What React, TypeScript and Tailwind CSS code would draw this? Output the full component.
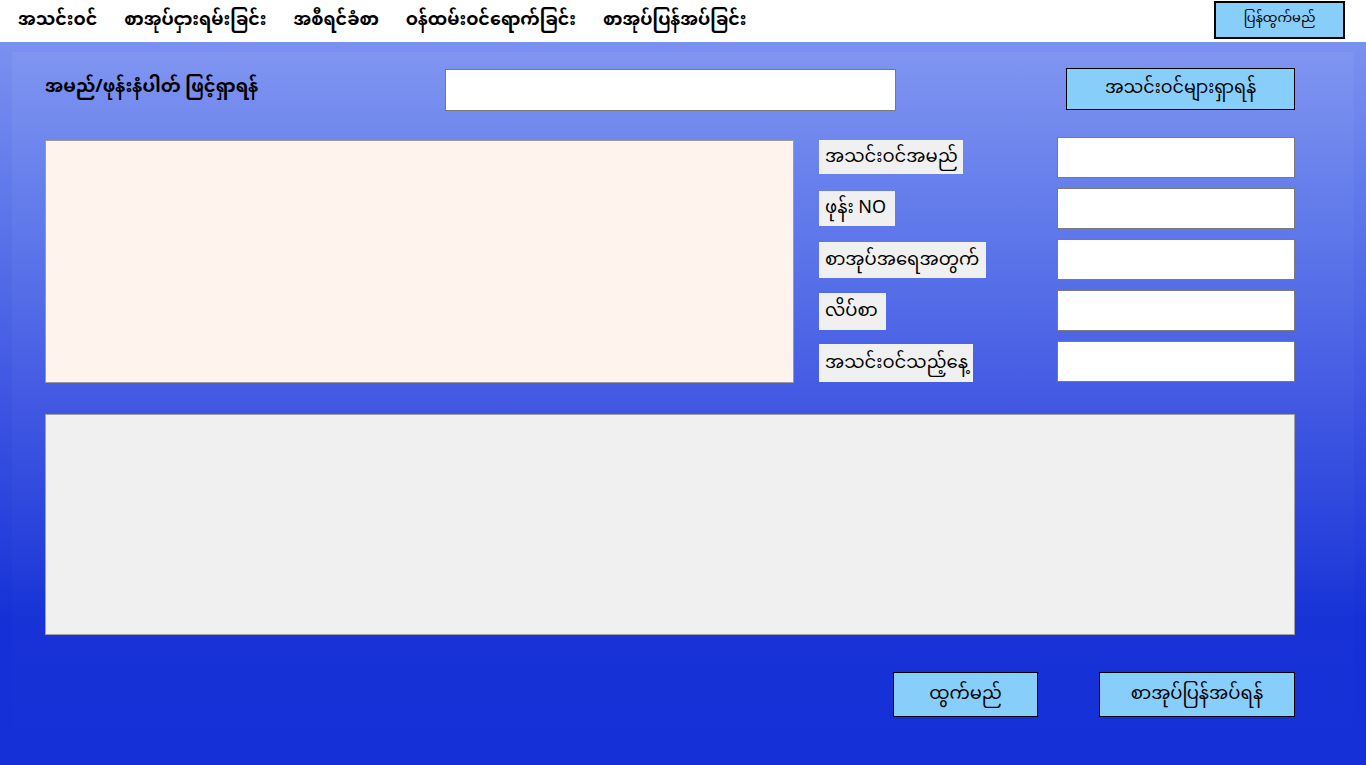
import React from 'react';

const MM = { fontFamily: '"Noto Sans Myanmar", "Myanmar Text", Padauk, "Noto Sans", "DejaVu Sans", sans-serif' };

const NAV = ['အသင်းဝင်', 'စာအုပ်ငှားရမ်းခြင်း', 'အစီရင်ခံစာ', 'ဝန်ထမ်းဝင်ရောက်ခြင်း', 'စာအုပ်ပြန်အပ်ခြင်း'];

const FIELDS = [
  { label: 'အသင်းဝင်အမည်', w: 'w-[144px] h-[34px]' },
  { label: 'ဖုန်း NO', w: 'w-[76px] h-[35px]' },
  { label: 'စာအုပ်အရေအတွက်', w: 'w-[167px] h-[36px]' },
  { label: 'လိပ်စာ', w: 'w-[67px] h-[37px]' },
  { label: 'အသင်းဝင်သည့်နေ့', w: 'w-[154px] h-[38px]' },
];

export default function App() {
  return (
    <div className="w-[1366px] h-[765px] overflow-hidden flex flex-col text-black" style={MM}>
      {/* Menu bar */}
      <div className="h-[42px] bg-white flex items-center shrink-0">
        <div className="flex items-center pl-[18px] gap-[27px] text-[17.5px] font-bold">
          {NAV.map(n => <span key={n}>{n}</span>)}
        </div>
        <button className="ml-auto mr-[21px] mb-[3px] w-[131px] h-[38px] bg-[#87cefa] border-2 border-black text-[13px]">
          ပြန်ထွက်မည်
        </button>
      </div>

      {/* Form */}
      <div className="flex-1 bg-linear-to-b from-[#7b91f0] from-0% via-[#3d54e2] via-50% to-[#1530d6] to-80% px-[12px] pt-[10px]">
        <div className="h-full bg-linear-to-b from-white/[0.05] to-white/0 px-[33px] pt-[17px]">
          <div className="flex items-start">
            <div className="w-[400px] pt-[5px] text-[18px] font-bold whitespace-nowrap">အမည်/ဖုန်းနံပါတ် ဖြင့်ရှာရန်</div>
            <div className="w-[451px] h-[42px] bg-white border border-[#7a7a7a]" />
            <button className="ml-[170px] -mt-[1px] w-[229px] h-[42px] bg-[#87cefa] border border-black text-[17.5px]">
              အသင်းဝင်များရှာရန်
            </button>
          </div>

          <div className="flex mt-[26px]">
            <div className="w-[749px] h-[243px] mt-[3px] bg-[#fff3ee] border border-[#9a9a9a]" />
            <div className="flex flex-col gap-[10px] ml-[25px]">
              {FIELDS.map(f => (
                <div key={f.label} className="flex items-start h-[41px]">
                  <div className="w-[238px] pt-[3px]">
                    <div className={`${f.w} bg-[#f0f0f0] px-[6px] flex items-center text-[18px] whitespace-nowrap`}>{f.label}</div>
                  </div>
                  <div className="w-[238px] h-[41px] bg-white border border-[#7a7a7a]" />
                </div>
              ))}
            </div>
          </div>

          <div className="mt-[31px] w-[1250px] h-[221px] bg-[#f0f0f0] border border-[#a0a0a0]" />

          <div className="flex justify-end gap-[61px] mt-[37px] w-[1250px]">
            <button className="w-[145px] h-[45px] bg-[#87cefa] border border-black text-[18px]">ထွက်မည်</button>
            <button className="w-[196px] h-[45px] bg-[#87cefa] border border-black text-[18px]">စာအုပ်ပြန်အပ်ရန်</button>
          </div>
        </div>
      </div>
    </div>
  );
}
